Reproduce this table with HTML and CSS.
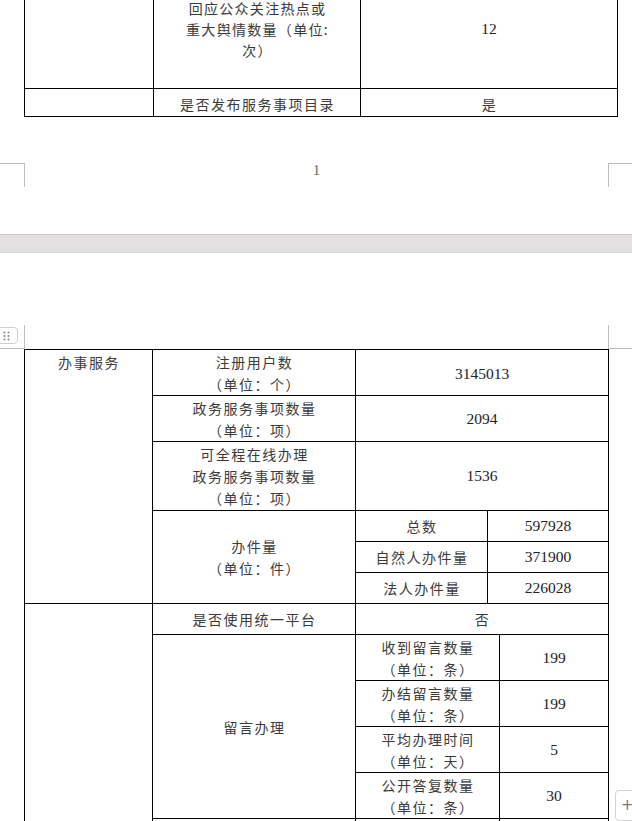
FILE: index.html
```html
<!DOCTYPE html>
<html lang="zh-CN">
<head>
<meta charset="utf-8">
<title>政务公开统计表</title>
<link rel="stylesheet" href="styles.css">
</head>
<body>
<main class="doc">
  <section class="page page-one">
    <table class="sheet sheet-one">
      <colgroup><col class="p1c1"><col class="p1c2"><col class="p1c3"></colgroup>
      <tr class="row-tall">
        <td></td>
        <td class="lbl lbl-tight">回应公众关注热点或<br>重大舆情数量（单位:<br>次）</td>
        <td class="num">12</td>
      </tr>
      <tr class="row-short">
        <td></td>
        <td class="lbl">是否发布服务事项目录</td>
        <td class="lbl">是</td>
      </tr>
    </table>
    <div class="page-foot">
      <span class="mark mark-foot-left"></span>
      <span class="page-no">1</span>
      <span class="mark mark-foot-right"></span>
    </div>
  </section>

  <div class="page-gap"></div>

  <section class="page page-two">
    <div class="page-head">
      <span class="mark mark-head-left"></span>
      <span class="mark mark-head-right"></span>
    </div>
    <table class="sheet sheet-two">
      <colgroup><col class="c1"><col class="c2"><col class="c3"><col class="c4"><col class="c5"></colgroup>
      <tr class="h46">
        <td rowspan="6" class="lbl cell-top">办事服务</td>
        <td class="lbl">注册用户数<br>（单位：个）</td>
        <td colspan="3" class="num num-low">3145013</td>
      </tr>
      <tr class="h46">
        <td class="lbl">政务服务事项数量<br>（单位：项）</td>
        <td colspan="3" class="num">2094</td>
      </tr>
      <tr class="h69">
        <td class="lbl">可全程在线办理<br>政务服务事项数量<br>（单位：项）</td>
        <td colspan="3" class="num">1536</td>
      </tr>
      <tr class="h31">
        <td rowspan="3" class="lbl">办件量<br>（单位：件）</td>
        <td class="lbl">总数</td>
        <td colspan="2" class="num">597928</td>
      </tr>
      <tr class="h31">
        <td class="lbl">自然人办件量</td>
        <td colspan="2" class="num">371900</td>
      </tr>
      <tr class="h31">
        <td class="lbl">法人办件量</td>
        <td colspan="2" class="num">226028</td>
      </tr>
      <tr class="h31">
        <td rowspan="6"></td>
        <td class="lbl">是否使用统一平台</td>
        <td colspan="3" class="lbl">否</td>
      </tr>
      <tr class="h46">
        <td rowspan="4" class="lbl">留言办理</td>
        <td colspan="2" class="lbl">收到留言数量<br>（单位：条）</td>
        <td class="num">199</td>
      </tr>
      <tr class="h46">
        <td colspan="2" class="lbl">办结留言数量<br>（单位：条）</td>
        <td class="num">199</td>
      </tr>
      <tr class="h46">
        <td colspan="2" class="lbl">平均办理时间<br>（单位：天）</td>
        <td class="num">5</td>
      </tr>
      <tr class="h46">
        <td colspan="2" class="lbl">公开答复数量<br>（单位：条）</td>
        <td class="num">30</td>
      </tr>
      <tr class="h46">
        <td></td>
        <td colspan="2"></td>
        <td></td>
      </tr>
    </table>
  </section>
</main>

<div class="table-handle" aria-hidden="true">
  <svg width="8" height="10" viewBox="0 0 8 10">
    <circle cx="1.5" cy="1.5" r="1" fill="#8a8a8a"/>
    <circle cx="5.5" cy="1.5" r="1" fill="#8a8a8a"/>
    <circle cx="1.5" cy="5" r="1" fill="#8a8a8a"/>
    <circle cx="5.5" cy="5" r="1" fill="#8a8a8a"/>
    <circle cx="1.5" cy="8.5" r="1" fill="#8a8a8a"/>
    <circle cx="5.5" cy="8.5" r="1" fill="#8a8a8a"/>
  </svg>
</div>
<div class="row-add" aria-hidden="true">+</div>
</body>
</html>
```

FILE: styles.css
```css
* { box-sizing: border-box; }

html, body {
  margin: 0;
  padding: 0;
}

body {
  width: 632px;
  height: 821px;
  overflow: hidden;
  position: relative;
  background: #ffffff;
  font-family: "Liberation Serif", "Noto Sans CJK SC", serif;
  color: #2a2a2a;
}

.doc {
  display: flex;
  flex-direction: column;
}

.page {
  background: #ffffff;
}

.page-one {
  height: 234px;
  overflow: hidden;
}

.page-gap {
  height: 19px;
  background: #e3e1df;
  border-top: 1px solid #c9c7c5;
  border-bottom: 1px solid #d6d6d6;
}

.page-two {
  flex: 1;
}

/* tables */
.sheet {
  border-collapse: collapse;
  table-layout: fixed;
  margin-left: 24px;
}

.sheet td {
  border: 1px solid #000000;
  padding: 0 2px;
  text-align: center;
  vertical-align: middle;
  font-size: 14px;
  line-height: 22px;
}

.sheet .lbl {
  font-family: "Noto Sans CJK SC", sans-serif;
  letter-spacing: 1.5px;
  padding-left: 3px;
  color: #3a3a3a;
}

.sheet .lbl-tight {
  line-height: 21px;
  letter-spacing: 1.3px;
}

.sheet .num {
  font-family: "Liberation Serif", serif;
  font-size: 15.5px;
  letter-spacing: 0;
  color: #222222;
}

.sheet .num-low {
  padding-top: 3px;
}

.sheet .cell-top {
  vertical-align: top;
  padding-top: 1px;
}

.sheet-one {
  width: 593px;
  margin-top: -31px;
}

.p1c1 { width: 129px; }
.p1c2 { width: 207px; }
.p1c3 { width: 257px; }

.row-tall { height: 119px; }
.row-short { height: 28px; }
.row-short .lbl { padding-top: 3px; }

.sheet-two {
  width: 584px;
}

.c1 { width: 128px; }
.c2 { width: 203px; }
.c3 { width: 132px; }
.c4 { width: 12px; }
.c5 { width: 109px; }

.h31 { height: 31px; }
.h46 { height: 46px; }
.h69 { height: 69px; }

/* page furniture */
.page-foot {
  display: flex;
  align-items: flex-start;
  margin-top: 46px;
}

.page-head {
  display: flex;
  justify-content: space-between;
  padding-top: 72px;
}

.mark {
  display: block;
  height: 24px;
  border: 0 solid #bdbdbd;
}

.mark-foot-left {
  width: 25px;
  border-top-width: 1px;
  border-right-width: 1px;
}

.mark-foot-right {
  width: 24px;
  border-top-width: 1px;
  border-left-width: 1px;
}

.mark-head-left {
  width: 25px;
  border-right-width: 1px;
  border-bottom-width: 1px;
}

.mark-head-right {
  width: 24px;
  border-left-width: 1px;
  border-bottom-width: 1px;
}

.page-no {
  flex: 1;
  text-align: center;
  font-family: "Liberation Serif", serif;
  font-size: 15px;
  line-height: 16px;
  margin-top: -1px;
  color: #6f6760;
}

/* overlays */
.table-handle {
  position: absolute;
  left: -5px;
  top: 327px;
  width: 23px;
  height: 17px;
  border: 1px solid #cfcfcf;
  border-radius: 4px;
  background: #ffffff;
  display: flex;
  align-items: center;
  justify-content: flex-end;
  padding-right: 6px;
}

.table-handle svg {
  display: block;
}

.row-add {
  position: absolute;
  left: 615px;
  top: 790px;
  width: 26px;
  height: 31px;
  border: 1px solid #d2d2d2;
  border-radius: 4px;
  background: #ffffff;
  font-family: "DejaVu Sans", sans-serif;
  font-size: 15px;
  line-height: 28px;
  padding-left: 5px;
  color: #777777;
}
```
